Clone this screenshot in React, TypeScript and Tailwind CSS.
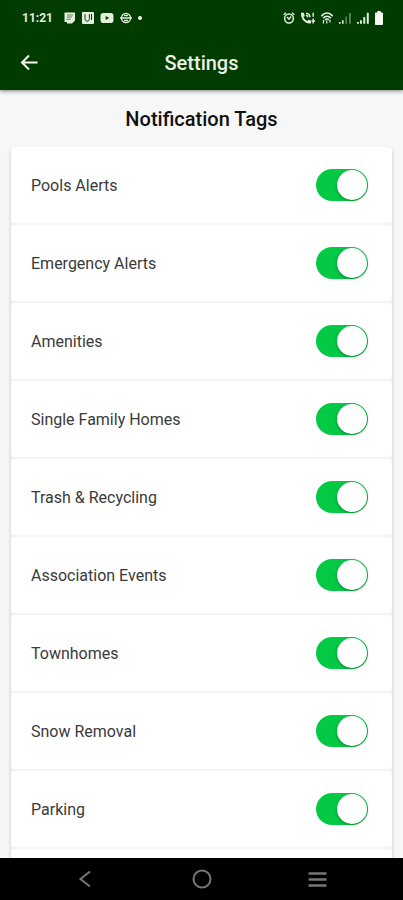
import { useState } from "react"

const TAGS = [
  "Pools Alerts",
  "Emergency Alerts",
  "Amenities",
  "Single Family Homes",
  "Trash & Recycling",
  "Association Events",
  "Townhomes",
  "Snow Removal",
  "Parking",
]

const CARD = "h-19 shrink-0 rounded bg-white"

function StatusBar() {
  return (
    <div className="flex h-9 items-center justify-between pr-5 pl-[22px] text-[#e3eedd]">
      <div className="flex items-center gap-2.5">
        <span className="w-8 text-xs leading-4 font-bold">11:21</span>
        <div className="flex items-center gap-1.5">
          <svg className="h-3 w-3" viewBox="0 0 12 12" aria-hidden>
            <path d="M0.5 0.5H11v8l-3 3H3V10H0.500z" fill="currentColor" />
            <path d="M3 3h6M3 5h5M2.500 7.200h4" stroke="#003b00" strokeWidth="0.6" fill="none" />
          </svg>
          <svg className="h-3 w-3" viewBox="0 0 12 12" aria-hidden>
            <rect width="12" height="12" rx="1" fill="currentColor" />
            <path d="M3 2.200v4.300c0 3.600 4.400 3.600 4.400 0V2.200M9.500 2v6" stroke="#003b00" strokeWidth="1" fill="none" />
          </svg>
          <svg className="h-3 w-3.5" viewBox="0 0 14 12" aria-hidden>
            <rect x="0.5" y="1" width="13" height="10" rx="2.8" fill="currentColor" />
            <path d="M5.7 4l3.5 2-3.5 2z" fill="#003b00" />
          </svg>
          <svg className="h-3 w-3" viewBox="0 0 12 12" aria-hidden>
            <circle cx="6" cy="6" r="4.5" fill="none" stroke="currentColor" strokeWidth="1.4" />
            <path d="M0 6h12M4 3.700h4M4 8.300h4" stroke="currentColor" strokeWidth="1.3" />
          </svg>
          <span className="h-1 w-1 rounded-full bg-[#edf5e9]" />
        </div>
      </div>

      <div className="flex items-center gap-1.5">
        <svg className="h-3 w-3" viewBox="0 0 12 12" fill="none" stroke="currentColor" aria-hidden>
          <circle cx="6" cy="6.5" r="4.4" strokeWidth="1.5" />
          <path d="M0.7 2.8l2.2-2M11.3 2.8l-2.2-2M4 5l2 2.2L8 4.5" strokeWidth="1.4" />
        </svg>
        <svg className="h-3 w-3.5" viewBox="0 0 14 12" aria-hidden>
          <path d="M0 0.800h2.800l1 3.100-1.400 1.200c.9 1.900 2.200 3.100 4 4l1.300-1.400 2.300.8v2.700C4.500 12.500-.5 6.700 0 .8z" fill="currentColor" />
          <path d="M5 1.200c2.200.2 3.800 1.800 4 4M5 3.300c1.100.2 1.800.9 2 2M12.200 0.800v4M12.200 6.500v5M10.600 9H14" stroke="currentColor" strokeWidth="1.400" fill="none" />
        </svg>
        <svg className="h-3 w-3" viewBox="0 0 12 12" fill="none" stroke="currentColor" aria-hidden>
          <path d="M0.300 4.200c3.200-4.300 8.200-4.300 11.400 0M2.200 6.200c2.200-2.700 5.400-2.700 7.600 0M4 8c1.200-1.200 2.800-1.200 4 0" strokeWidth="1.600" />
          <path d="M2.500 8v3.500M5.800 8.500v3M9 8v2.500" strokeWidth="1.200" />
        </svg>
        <svg className="h-3 w-3" viewBox="0 0 12 12" fill="currentColor" aria-hidden>
          <path d="M0 10h1.600v1.700H0zM3 8.200h1.600v3.500H3z" />
          <path d="M6.400 4.500H8v7.200H6.400zM10 1h1.800v10.700H10z" opacity="0.4" />
        </svg>
        <svg className="h-3 w-3" viewBox="0 0 12 12" fill="currentColor" aria-hidden>
          <path d="M0 10h1.800v1.700H0zM3 8.200h1.900v3.500H3zM6.300 5h1.900v6.700H6.300zM9.800 0.800h2v10.900h-2z" />
        </svg>
        <svg className="h-3.5 w-2" viewBox="0 0 8 14" fill="#f3f8f0" aria-hidden>
          <path d="M2.300 0h3.400v1.500H7c.6 0 1 .4 1 1V13c0 .6-.4 1-1 1H1c-.6 0-1-.4-1-1V2.500c0-.6.4-1 1-1h1.300z" />
        </svg>
      </div>
    </div>
  )
}

function TagRow({ label }: { label: string }) {
  const [on, setOn] = useState(true)

  return (
    <label className={`flex items-center justify-between pr-6 pl-5 ${CARD}`}>
      <span className="pt-0.5 text-base text-[#3a3a3a]">{label}</span>
      <input
        type="checkbox"
        role="switch"
        checked={on}
        onChange={(e) => setOn(e.target.checked)}
        className="flex h-8 w-13 appearance-none items-center rounded-full bg-gray-300 p-px before:h-[30px] before:w-[30px] before:rounded-full before:bg-white before:shadow-[0_1px_3px_rgba(0,0,0,0.35)] before:content-[''] checked:justify-end checked:bg-[#04c945]"
      />
    </label>
  )
}

function NavBar() {
  return (
    <nav className="grid h-[42px] shrink-0 grid-cols-[1fr_64px_1fr] items-center bg-black text-[#757575]">
      <button type="button" aria-label="Back" className="flex justify-center">
        <svg className="h-5 w-5" viewBox="0 0 20 20" fill="none" stroke="currentColor" strokeWidth="2" aria-hidden>
          <path d="M15 2.500L5.500 10l9.500 7.500" />
        </svg>
      </button>
      <button type="button" aria-label="Home" className="flex justify-center">
        <svg className="h-5 w-5" viewBox="0 0 20 20" fill="none" stroke="currentColor" strokeWidth="2" aria-hidden>
          <circle cx="10" cy="10" r="8.500" />
        </svg>
      </button>
      <button type="button" aria-label="Recent apps" className="flex justify-center">
        <svg className="h-5 w-5" viewBox="0 0 20 20" fill="none" stroke="currentColor" strokeWidth="2.500" aria-hidden>
          <path d="M0.500 4.500h18M0.500 10.500h18M0.500 16.500h18" />
        </svg>
      </button>
    </nav>
  )
}

export default function App() {
  return (
    <div className="flex h-screen flex-col bg-[#f7f7f7] font-[Roboto,sans-serif]">
      <header className="z-10 shrink-0 bg-[#003b00] shadow-[0_1px_4px_rgba(0,0,0,0.5)]">
        <StatusBar />
        <div className="grid h-[54px] grid-cols-[1fr_auto_1fr] items-center px-5">
          <button type="button" aria-label="Go back" className="justify-self-start text-[#f3f7ef]">
            <svg className="h-[18px] w-[18px]" viewBox="0 0 18 18" fill="none" stroke="currentColor" strokeWidth="2" aria-hidden>
              <path d="M17.500 8.500H2.500M9 1.500l-7 7 7 7" />
            </svg>
          </button>
          <h1 className="text-xl font-medium text-[#e9f0e4]">Settings</h1>
        </div>
      </header>

      <main className="flex min-h-0 flex-1 flex-col overflow-y-auto px-[11px] [scrollbar-width:none]">
        <h2 className="flex h-[57px] shrink-0 items-center justify-center text-xl font-medium text-[#111]">
          Notification Tags
        </h2>
        <div className="flex flex-col gap-0.5 rounded-t bg-[#f3f3f3] shadow-[0_3px_4px_rgba(0,0,0,0.2)]">
          {TAGS.map((tag) => (
            <TagRow key={tag} label={tag} />
          ))}
          <div className={CARD} />
        </div>
      </main>

      <NavBar />
    </div>
  )
}
